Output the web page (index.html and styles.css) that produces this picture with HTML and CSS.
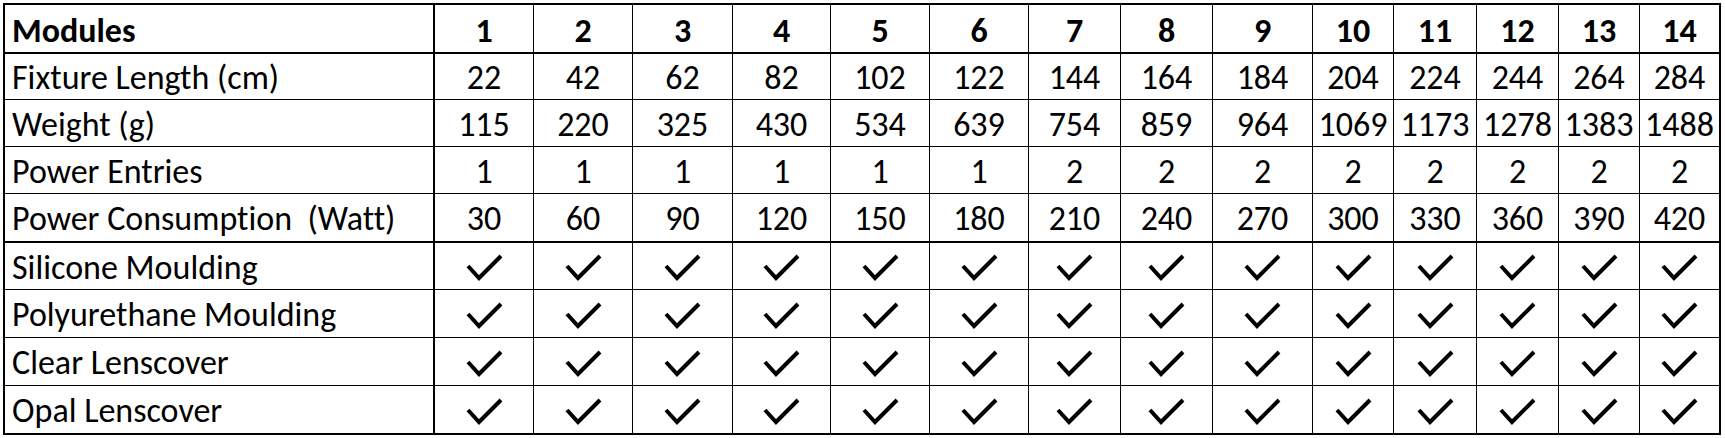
FILE: index.html
```html
<!DOCTYPE html>
<html lang="en">
<head>
<meta charset="utf-8">
<title>Modules</title>
<link rel="stylesheet" href="styles.css">
</head>
<body>
<div class="spec" role="table">
  <div class="row head" role="row">
    <div class="cell label" role="columnheader">Modules</div>
    <div class="cell" role="columnheader">1</div>
    <div class="cell" role="columnheader">2</div>
    <div class="cell" role="columnheader">3</div>
    <div class="cell" role="columnheader">4</div>
    <div class="cell" role="columnheader">5</div>
    <div class="cell" role="columnheader">6</div>
    <div class="cell" role="columnheader">7</div>
    <div class="cell" role="columnheader">8</div>
    <div class="cell" role="columnheader">9</div>
    <div class="cell" role="columnheader">10</div>
    <div class="cell" role="columnheader">11</div>
    <div class="cell" role="columnheader">12</div>
    <div class="cell" role="columnheader">13</div>
    <div class="cell" role="columnheader">14</div>
  </div>
  <div class="row" role="row">
    <div class="cell label">Fixture Length (cm)</div>
    <div class="cell">22</div><div class="cell">42</div><div class="cell">62</div><div class="cell">82</div><div class="cell">102</div><div class="cell">122</div><div class="cell">144</div><div class="cell">164</div><div class="cell">184</div><div class="cell">204</div><div class="cell">224</div><div class="cell">244</div><div class="cell">264</div><div class="cell">284</div>
  </div>
  <div class="row" role="row">
    <div class="cell label">Weight (g)</div>
    <div class="cell">115</div><div class="cell">220</div><div class="cell">325</div><div class="cell">430</div><div class="cell">534</div><div class="cell">639</div><div class="cell">754</div><div class="cell">859</div><div class="cell">964</div><div class="cell">1069</div><div class="cell">1173</div><div class="cell">1278</div><div class="cell">1383</div><div class="cell">1488</div>
  </div>
  <div class="row" role="row">
    <div class="cell label">Power Entries</div>
    <div class="cell">1</div><div class="cell">1</div><div class="cell">1</div><div class="cell">1</div><div class="cell">1</div><div class="cell">1</div><div class="cell">2</div><div class="cell">2</div><div class="cell">2</div><div class="cell">2</div><div class="cell">2</div><div class="cell">2</div><div class="cell">2</div><div class="cell">2</div>
  </div>
  <div class="row thick" role="row">
    <div class="cell label">Power Consumption&nbsp; (Watt)</div>
    <div class="cell">30</div><div class="cell">60</div><div class="cell">90</div><div class="cell">120</div><div class="cell">150</div><div class="cell">180</div><div class="cell">210</div><div class="cell">240</div><div class="cell">270</div><div class="cell">300</div><div class="cell">330</div><div class="cell">360</div><div class="cell">390</div><div class="cell">420</div>
  </div>
  <div class="row checks" role="row" id="r-sil">
    <div class="cell label">Silicone Moulding</div>
  </div>
  <div class="row checks" role="row" id="r-pu">
    <div class="cell label">Polyurethane Moulding</div>
  </div>
  <div class="row checks" role="row" id="r-clear">
    <div class="cell label">Clear Lenscover</div>
  </div>
  <div class="row checks last" role="row" id="r-opal">
    <div class="cell label">Opal Lenscover</div>
  </div>
</div>
<script src="script.js"></script>
</body>
</html>
```

FILE: styles.css
```css
* { box-sizing: border-box; }
html, body { margin: 0; padding: 0; background: #fff; }

.spec {
  margin: 3px 0 0 3px;
  width: 1718px;
  border: 2px solid #000;
  display: grid;
  grid-template-rows: 48px 47px 47px 47px 49px 47px 48px 48px 47px;
  font-family: Carlito, "Open Sans", "Noto Sans", sans-serif;
  font-size: 34px;
  font-variant-ligatures: none;
  color: #000;
}

.row {
  display: grid;
  grid-template-columns: 430px 99px 99px 100px 98px 99px 99px 92px 92px 100px 81px 83px 82px 81px 79px;
}

.cell {
  display: flex;
  align-items: center;
  justify-content: center;
  border-right: 1px solid #000;
  border-bottom: 1px solid #000;
  white-space: nowrap;
  line-height: 1.2;
  padding-top: 4px;
}
.cell:last-child { border-right: none; }
.cell.label {
  justify-content: flex-start;
  padding-left: 7px;
  border-right: 2px solid #000;
}

.head .cell { font-weight: bold; border-bottom: 2px solid #000; padding-top: 6px; }
.thick .cell { border-bottom: 2px solid #000; }
.last .cell { border-bottom: none; }

.check { display: block; width: 37px; height: 27px; margin-top: -1px; }
.check path { fill: none; stroke: #000; stroke-width: 4; stroke-linejoin: miter; }
```

FILE: script.js
```js
document.querySelectorAll('.row.checks').forEach(function (row) {
  for (var i = 0; i < 14; i++) {
    var c = document.createElement('div');
    c.className = 'cell';
    c.setAttribute('role', 'cell');
    c.innerHTML = '<svg class="check" viewBox="0 0 37 27" aria-label="yes"><path d="M2 12 L13 24 L35 2"/></svg>';
    row.appendChild(c);
  }
});
```
